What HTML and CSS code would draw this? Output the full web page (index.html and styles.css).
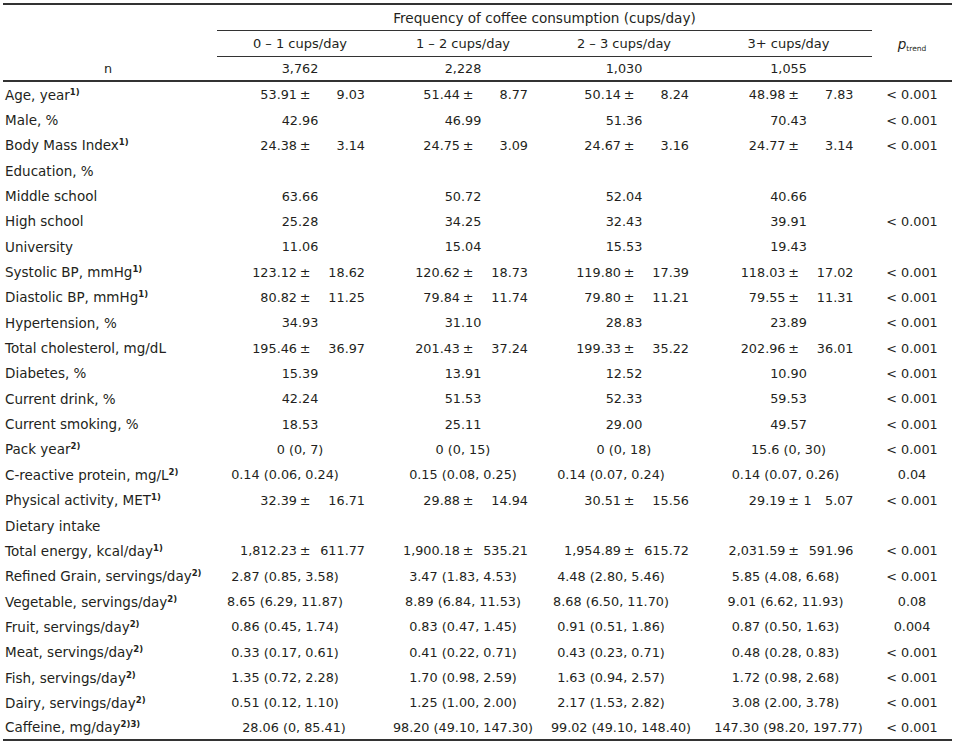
FILE: index.html
```html
<!DOCTYPE html>
<html>
<head>
<meta charset="utf-8">
<link rel="stylesheet" href="styles.css">
</head>
<body>
<table class="tbl">
  <colgroup>
    <col class="w-label"><col class="w-c1"><col class="w-c2"><col class="w-c3"><col class="w-c4"><col class="w-p">
  </colgroup>
  <thead>
    <tr class="h1">
      <th></th>
      <th colspan="4" class="freq">Frequency of coffee consumption (cups/day)</th>
      <th></th>
    </tr>
    <tr class="h2">
      <th></th>
      <th class="ul">0 – 1 cups/day</th>
      <th class="ul">1 – 2 cups/day</th>
      <th class="ul">2 – 3 cups/day</th>
      <th class="ul">3+ cups/day</th>
      <th><i class="pi">p</i><span class="sub">trend</span></th>
    </tr>
    <tr class="h3">
      <th class="ncell">n</th>
      <th>3,762</th><th>2,228</th><th>1,030</th><th>1,055</th><th></th>
    </tr>
  </thead>
  <tbody>
    <tr><td class="lab">Age, year<sup>1)</sup></td>
      <td><span class="ms"><span class="m">53.91</span><span class="pm">±</span><span class="s">9.03</span></span></td>
      <td><span class="ms"><span class="m">51.44</span><span class="pm">±</span><span class="s">8.77</span></span></td>
      <td><span class="ms"><span class="m">50.14</span><span class="pm">±</span><span class="s">8.24</span></span></td>
      <td><span class="ms"><span class="m">48.98</span><span class="pm">±</span><span class="s">7.83</span></span></td>
      <td>&lt; 0.001</td></tr>
    <tr><td class="lab">Male, %</td><td>42.96</td><td>46.99</td><td>51.36</td><td>70.43</td><td>&lt; 0.001</td></tr>
    <tr><td class="lab">Body Mass Index<sup>1)</sup></td>
      <td><span class="ms"><span class="m">24.38</span><span class="pm">±</span><span class="s">3.14</span></span></td>
      <td><span class="ms"><span class="m">24.75</span><span class="pm">±</span><span class="s">3.09</span></span></td>
      <td><span class="ms"><span class="m">24.67</span><span class="pm">±</span><span class="s">3.16</span></span></td>
      <td><span class="ms"><span class="m">24.77</span><span class="pm">±</span><span class="s">3.14</span></span></td>
      <td>&lt; 0.001</td></tr>
    <tr><td class="lab">Education, %</td><td></td><td></td><td></td><td></td><td></td></tr>
    <tr><td class="lab">Middle school</td><td>63.66</td><td>50.72</td><td>52.04</td><td>40.66</td><td></td></tr>
    <tr><td class="lab">High school</td><td>25.28</td><td>34.25</td><td>32.43</td><td>39.91</td><td>&lt; 0.001</td></tr>
    <tr><td class="lab">University</td><td>11.06</td><td>15.04</td><td>15.53</td><td>19.43</td><td></td></tr>
    <tr><td class="lab">Systolic BP, mmHg<sup>1)</sup></td>
      <td><span class="ms"><span class="m">123.12</span><span class="pm">±</span><span class="s">18.62</span></span></td>
      <td><span class="ms"><span class="m">120.62</span><span class="pm">±</span><span class="s">18.73</span></span></td>
      <td><span class="ms"><span class="m">119.80</span><span class="pm">±</span><span class="s">17.39</span></span></td>
      <td><span class="ms"><span class="m">118.03</span><span class="pm">±</span><span class="s">17.02</span></span></td>
      <td>&lt; 0.001</td></tr>
    <tr><td class="lab">Diastolic BP, mmHg<sup>1)</sup></td>
      <td><span class="ms"><span class="m">80.82</span><span class="pm">±</span><span class="s">11.25</span></span></td>
      <td><span class="ms"><span class="m">79.84</span><span class="pm">±</span><span class="s">11.74</span></span></td>
      <td><span class="ms"><span class="m">79.80</span><span class="pm">±</span><span class="s">11.21</span></span></td>
      <td><span class="ms"><span class="m">79.55</span><span class="pm">±</span><span class="s">11.31</span></span></td>
      <td>&lt; 0.001</td></tr>
    <tr><td class="lab">Hypertension, %</td><td>34.93</td><td>31.10</td><td>28.83</td><td>23.89</td><td>&lt; 0.001</td></tr>
    <tr><td class="lab">Total cholesterol, mg/dL</td>
      <td><span class="ms"><span class="m">195.46</span><span class="pm">±</span><span class="s">36.97</span></span></td>
      <td><span class="ms"><span class="m">201.43</span><span class="pm">±</span><span class="s">37.24</span></span></td>
      <td><span class="ms"><span class="m">199.33</span><span class="pm">±</span><span class="s">35.22</span></span></td>
      <td><span class="ms"><span class="m">202.96</span><span class="pm">±</span><span class="s">36.01</span></span></td>
      <td>&lt; 0.001</td></tr>
    <tr><td class="lab">Diabetes, %</td><td>15.39</td><td>13.91</td><td>12.52</td><td>10.90</td><td>&lt; 0.001</td></tr>
    <tr><td class="lab">Current drink, %</td><td>42.24</td><td>51.53</td><td>52.33</td><td>59.53</td><td>&lt; 0.001</td></tr>
    <tr><td class="lab">Current smoking, %</td><td>18.53</td><td>25.11</td><td>29.00</td><td>49.57</td><td>&lt; 0.001</td></tr>
    <tr><td class="lab">Pack year<sup>2)</sup></td><td>0 (0, 7)</td><td>0 (0, 15)</td><td>0 (0, 18)</td><td>15.6 (0, 30)</td><td>&lt; 0.001</td></tr>
    <tr class="med"><td class="lab">C-reactive protein, mg/L<sup>2)</sup></td><td>0.14 (0.06, 0.24)</td><td>0.15 (0.08, 0.25)</td><td>0.14 (0.07, 0.24)</td><td>0.14 (0.07, 0.26)</td><td>0.04</td></tr>
    <tr><td class="lab">Physical activity, MET<sup>1)</sup></td>
      <td><span class="ms"><span class="m">32.39</span><span class="pm">±</span><span class="s">16.71</span></span></td>
      <td><span class="ms"><span class="m">29.88</span><span class="pm">±</span><span class="s">14.94</span></span></td>
      <td><span class="ms"><span class="m">30.51</span><span class="pm">±</span><span class="s">15.56</span></span></td>
      <td><span class="ms"><span class="m">29.19</span><span class="pm">±</span><span class="s split"><span>1</span><span>5.07</span></span></span></td>
      <td>&lt; 0.001</td></tr>
    <tr><td class="lab">Dietary intake</td><td></td><td></td><td></td><td></td><td></td></tr>
    <tr><td class="lab">Total energy, kcal/day<sup>1)</sup></td>
      <td><span class="ms"><span class="m">1,812.23</span><span class="pm">±</span><span class="s">611.77</span></span></td>
      <td><span class="ms"><span class="m">1,900.18</span><span class="pm">±</span><span class="s">535.21</span></span></td>
      <td><span class="ms"><span class="m">1,954.89</span><span class="pm">±</span><span class="s">615.72</span></span></td>
      <td><span class="ms"><span class="m">2,031.59</span><span class="pm">±</span><span class="s">591.96</span></span></td>
      <td>&lt; 0.001</td></tr>
    <tr class="med"><td class="lab">Refined Grain, servings/day<sup>2)</sup></td><td>2.87 (0.85, 3.58)</td><td>3.47 (1.83, 4.53)</td><td>4.48 (2.80, 5.46)</td><td>5.85 (4.08, 6.68)</td><td>&lt; 0.001</td></tr>
    <tr class="med"><td class="lab">Vegetable, servings/day<sup>2)</sup></td><td>8.65 (6.29, 11.87)</td><td>8.89 (6.84, 11.53)</td><td>8.68 (6.50, 11.70)</td><td>9.01 (6.62, 11.93)</td><td>0.08</td></tr>
    <tr class="med"><td class="lab">Fruit, servings/day<sup>2)</sup></td><td>0.86 (0.45, 1.74)</td><td>0.83 (0.47, 1.45)</td><td>0.91 (0.51, 1.86)</td><td>0.87 (0.50, 1.63)</td><td>0.004</td></tr>
    <tr class="med"><td class="lab">Meat, servings/day<sup>2)</sup></td><td>0.33 (0.17, 0.61)</td><td>0.41 (0.22, 0.71)</td><td>0.43 (0.23, 0.71)</td><td>0.48 (0.28, 0.83)</td><td>&lt; 0.001</td></tr>
    <tr class="med"><td class="lab">Fish, servings/day<sup>2)</sup></td><td>1.35 (0.72, 2.28)</td><td>1.70 (0.98, 2.59)</td><td>1.63 (0.94, 2.57)</td><td>1.72 (0.98, 2.68)</td><td>&lt; 0.001</td></tr>
    <tr class="med"><td class="lab">Dairy, servings/day<sup>2)</sup></td><td>0.51 (0.12, 1.10)</td><td>1.25 (1.00, 2.00)</td><td>2.17 (1.53, 2.82)</td><td>3.08 (2.00, 3.78)</td><td>&lt; 0.001</td></tr>
    <tr class="med last"><td class="lab">Caffeine, mg/day<sup>2)3)</sup></td><td>28.06 (0, 85.41)</td><td>98.20 (49.10, 147.30)</td><td>99.02 (49.10, 148.40)</td><td>147.30 (98.20, 197.77)</td><td>&lt; 0.001</td></tr>
  </tbody>
</table>
</body>
</html>
```

FILE: styles.css
```css
html, body {
  margin: 0;
  padding: 0;
  background: #ffffff;
}
body {
  padding: 3px 0 0 3px;
  font-family: "DejaVu Sans", "Liberation Sans", sans-serif;
  font-size: 12.8px;
  color: #231f20;
}
.tbl {
  border-collapse: separate;
  border-spacing: 0;
  table-layout: fixed;
  width: 949px;
}
.w-label { width: 214px; }
.w-c1 { width: 166px; }
.w-c2 { width: 160px; }
.w-c3 { width: 162px; }
.w-c4 { width: 167px; }
.w-p { width: 80px; }

th, td {
  padding: 0;
  font-weight: normal;
  text-align: center;
  vertical-align: middle;
  white-space: nowrap;
  box-sizing: border-box;
}
.h1 th {
  border-top: 2px solid #333;
  height: 28px;
}
.h1 .freq {
  border-bottom: 1px solid #333;
  font-size: 13.6px;
}
.h2 th { height: 26px; font-size: 13px; }
.h2 .ul { border-bottom: 1px solid #333; }
.h3 th {
  height: 25px;
  border-bottom: 2px solid #333;
}
.ncell { padding-right: 4px; }
.pi {
  font-style: italic;
  font-size: 13.5px;
}
.sub {
  font-size: 7.5px;
  vertical-align: -2px;
}
tbody td { height: 25.35px; }
td.lab {
  text-align: left;
  padding-left: 2px;
  font-size: 13.5px;
}
sup {
  font-size: 8.5px;
  font-weight: bold;
  vertical-align: 5px;
  line-height: 0;
}
.ms {
  display: inline-flex;
  align-items: baseline;
}
.m {
  display: inline-block;
  width: 62px;
  text-align: right;
}
.pm {
  display: inline-block;
  width: 16px;
  padding-right: 2px;
  text-align: center;
}
.s {
  display: inline-block;
  width: 50px;
  text-align: right;
}
.s.split {
  display: inline-flex;
  justify-content: space-between;
}
.med td:nth-child(2) { padding-right: 30px; }
.med td:nth-child(4) { padding-right: 26px; }
.med td:nth-child(5) { padding-right: 6px; }
.med.last td:nth-child(2) { padding-right: 12px; }
.med.last td:nth-child(4) { padding-right: 6px; }
.med.last td:nth-child(5) { padding-right: 0; }
.last td { border-bottom: 2px solid #333; }
```
